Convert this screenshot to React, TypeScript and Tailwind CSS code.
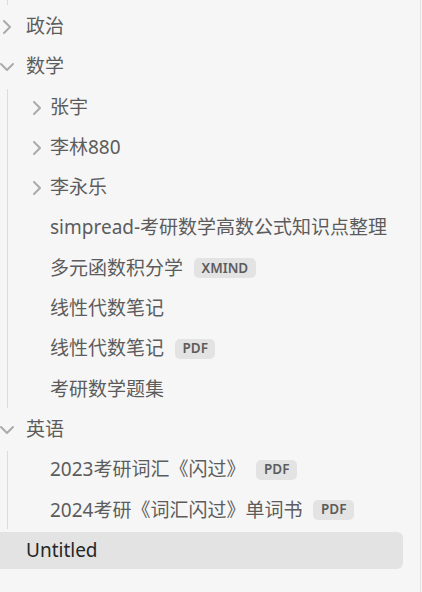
import React from "react";

const font = { fontFamily: '"Noto Sans", "Noto Sans CJK SC", sans-serif' };

function ChevronRight() {
  return (
    <svg width="14" height="14" viewBox="0 0 14 14" className="shrink-0">
      <polyline points="4,1 10,7 4,13" fill="none" stroke="#ababab" strokeWidth="2" strokeLinecap="round" strokeLinejoin="round" />
    </svg>
  );
}
function ChevronDown() {
  return (
    <svg width="14" height="14" viewBox="0 0 14 14" className="shrink-0">
      <polyline points="1,4 7,10 13,4" fill="none" stroke="#ababab" strokeWidth="2" strokeLinecap="round" strokeLinejoin="round" />
    </svg>
  );
}

function Badge({ children }: { children: React.ReactNode }) {
  return (
    <span className="ml-[11px] inline-flex h-[20px] items-center rounded-[5px] bg-[#e3e3e3] px-[7.5px] text-[13.5px] font-semibold leading-none text-[#5c5c5c]">
      {children}
    </span>
  );
}

type RowProps = {
  label: string;
  chevron?: "right" | "down";
  badge?: string;
  child?: boolean;
  active?: boolean;
};

function Row({ label, chevron, badge, child, active }: RowProps) {
  return (
    <div
      className={
        "relative flex h-[37px] w-[403px] items-center rounded-r-[6px] " +
        (child ? "w-[395px] pl-[42px] " : "pl-[26px] ") +
        (active ? "bg-[#e3e3e3] text-[#262626]" : "text-[#5c5c5c]")
      }
    >
      {chevron && (
        <span className={"absolute top-[12px] " + (child ? "left-[22px]" : "left-0")}>
          {chevron === "right" ? <ChevronRight /> : <ChevronDown />}
        </span>
      )}
      <span className="whitespace-nowrap text-[19px] leading-none">{label}</span>
      {badge && <Badge>{badge}</Badge>}
    </div>
  );
}

function Children({ children }: { children: React.ReactNode }) {
  return <div className="ml-[7px] flex flex-col gap-[3.3px] border-l border-[#dcdcdc]">{children}</div>;
}

export default function App() {
  return (
    <div className="flex h-[592px] w-[422px] bg-[#f6f6f6]" style={font}>
      <div className="h-full w-[421px] border-r border-[#e2e2e2]">
        <div className="flex flex-col gap-[3.3px]">
          <div className="ml-[7px] h-[4.7px] border-l border-[#dcdcdc]" />
          <Row label="政治" chevron="right" />
          <Row label="数学" chevron="down" />
          <Children>
            <Row child label="张宇" chevron="right" />
            <Row child label="李林880" chevron="right" />
            <Row child label="李永乐" chevron="right" />
            <Row child label="simpread-考研数学高数公式知识点整理" />
            <Row child label="多元函数积分学" badge="XMIND" />
            <Row child label="线性代数笔记" />
            <Row child label="线性代数笔记" badge="PDF" />
            <Row child label="考研数学题集" />
          </Children>
          <Row label="英语" chevron="down" />
          <Children>
            <Row child label="2023考研词汇《闪过》" badge="PDF" />
            <Row child label="2024考研《词汇闪过》单词书" badge="PDF" />
          </Children>
          <Row label="Untitled" active />
        </div>
      </div>
    </div>
  );
}
